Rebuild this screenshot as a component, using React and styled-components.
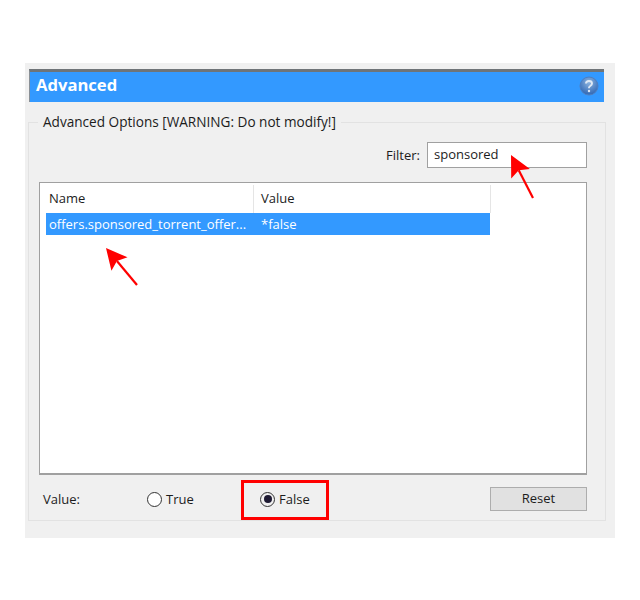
import React from "react";
import styled, { createGlobalStyle } from "styled-components";

const Global = createGlobalStyle`
  html, body { margin: 0; padding: 0; background: #fff; }
  body { font-family: "Open Sans", "Noto Sans", "Liberation Sans", sans-serif; font-size: 13px; color: #1c1c1c; }
`;

const Page = styled.div`
  width: 640px;
  height: 600px;
  padding: 63px 0 0 25px;
  box-sizing: border-box;
  overflow: hidden;
`;

const Window = styled.div`
  position: relative;
  width: 590px;
  height: 475px;
  box-sizing: border-box;
  padding: 6px 0 0 4px;
  background: #f0f0f0;
`;

const TitleBar = styled.div`
  width: 575px;
  height: 33px;
  box-sizing: border-box;
  border-top: 3px solid #6f7478;
  border-left: 1px solid #8a9096;
  background: #3399ff;
  display: flex;
  align-items: center;
  justify-content: space-between;
  padding: 0 5px 2px 6px;
`;

const Title = styled.h1`
  margin: 0 0 3px;
  font-size: 16.6px;
  font-weight: 700;
  color: #fff;
`;

const Group = styled.div`
  position: relative;
  width: 578px;
  height: 399px;
  margin: 20px 0 0 -1px;
  box-sizing: border-box;
  border: 1px solid #e2e2e2;
  padding: 19px 18px 0 10px;
  display: flex;
  flex-direction: column;
`;

const Legend = styled.div`
  position: absolute;
  top: -10px;
  left: 9px;
  padding: 0 5px;
  background: #f0f0f0;
  font-size: 13.6px;
  line-height: 18px;
  white-space: nowrap;
`;

const FilterRow = styled.div`
  display: flex;
  justify-content: flex-end;
  align-items: center;
  gap: 7px;
  height: 26px;
`;

const FilterInput = styled.div`
  width: 160px;
  height: 26px;
  box-sizing: border-box;
  border: 1px solid #a0a0a0;
  background: #fff;
  padding: 0 6px;
  line-height: 23px;
`;

const List = styled.div`
  margin-top: 14px;
  height: 293px;
  box-sizing: border-box;
  border: 1px solid #a0a0a0;
  border-bottom-width: 2px;
  background: #fff;
  padding: 2px 96px 0 6px;
`;

const Columns = styled.div`
  display: grid;
  grid-template-columns: 208px 237px;
  height: ${(p) => p.$h}px;
  align-items: center;
  background: ${(p) => (p.$selected ? "#3399ff" : "transparent")};
  color: ${(p) => (p.$selected ? "#fff" : "inherit")};
`;

const HeadCell = styled.div`
  height: 100%;
  padding-left: ${(p) => p.$pad}px;
  line-height: 26px;
  border-right: 1px solid #e5e5e5;
`;

const Cell = styled.div`
  padding-left: ${(p) => p.$pad}px;
  white-space: nowrap;
  overflow: hidden;
`;

const Bottom = styled.div`
  display: flex;
  align-items: center;
  height: 24px;
  margin-top: 12px;
`;

const ValueLabel = styled.div`
  width: 108px;
  padding-left: 4px;
  box-sizing: border-box;
`;

const RadioOption = styled.div`
  display: flex;
  align-items: center;
  gap: 4px;
  width: ${(p) => p.$w}px;
`;

const RadioDot = styled.span`
  width: 15px;
  height: 15px;
  box-sizing: border-box;
  border: 1px solid #333;
  border-radius: 50%;
  background: ${(p) => (p.$checked ? "#f0f0f0" : "#fff")};
  display: flex;
  align-items: center;
  justify-content: center;
  &::after {
    content: "";
    display: ${(p) => (p.$checked ? "block" : "none")};
    width: 8px;
    height: 8px;
    border-radius: 50%;
    background: #1e1a33;
  }
`;

const ResetButton = styled.div`
  margin-left: auto;
  width: 97px;
  height: 24px;
  box-sizing: border-box;
  border: 1px solid #adadad;
  background: #e1e1e1;
  text-align: center;
  line-height: 21px;
`;

const Highlight = styled.div`
  position: absolute;
  left: 216px;
  top: 417px;
  width: 88px;
  height: 40px;
  box-sizing: border-box;
  border: 3px solid #ff0000;
`;

const ArrowSvg = styled.svg`
  position: absolute;
  left: 0;
  top: 0;
  pointer-events: none;
`;

function Arrow({ x1, y1, x2, y2 }) {
  const a = Math.atan2(y2 - y1, x2 - x1);
  const L = 21, W = 10.5;
  const bx = x2 - Math.cos(a) * L, by = y2 - Math.sin(a) * L;
  const nx = -Math.sin(a) * W, ny = Math.cos(a) * W;
  const ix = x2 - Math.cos(a) * (L - 4), iy = y2 - Math.sin(a) * (L - 4);
  return (
    <g fill="#ff0000" stroke="none">
      <line x1={x1} y1={y1} x2={ix} y2={iy} stroke="#ff0000" strokeWidth="2.2" />
      <polygon points={`${x2},${y2} ${bx + nx},${by + ny} ${ix},${iy} ${bx - nx},${by - ny}`} />
    </g>
  );
}

function HelpIcon() {
  return (
    <svg width="20" height="20" viewBox="0 0 20 20" aria-hidden="true">
      <defs>
        <radialGradient id="hg" cx="50%" cy="30%" r="70%">
          <stop offset="0%" stopColor="#8cb4e0" />
          <stop offset="100%" stopColor="#2f66b4" />
        </radialGradient>
      </defs>
      <circle cx="10" cy="10" r="9" fill="url(#hg)" stroke="#4f7fc0" strokeWidth="1" />
      <path d="M7 7.6C7 5.8 8.4 5 10 5s3 .9 3 2.5c0 1.4-1 2-1.8 2.5-.7.4-1.2.9-1.2 1.8v.4" fill="none" stroke="#dfe9f5" strokeWidth="1.9" />
      <circle cx="10" cy="15" r="1.2" fill="#dfe9f5" />
    </svg>
  );
}

export default function App() {
  return (
    <Page>
      <Global />
      <Window>
        <TitleBar>
          <Title>Advanced</Title>
          <HelpIcon />
        </TitleBar>
        <Group>
          <Legend>Advanced Options [WARNING: Do not modify!]</Legend>
          <FilterRow>
            <span>Filter:</span>
            <FilterInput>sponsored</FilterInput>
          </FilterRow>
          <List>
            <Columns $h={28}>
              <HeadCell $pad={3}>Name</HeadCell>
              <HeadCell $pad={7}>Value</HeadCell>
            </Columns>
            <Columns $h={22} $selected>
              <Cell $pad={3}>offers.sponsored_torrent_offer...</Cell>
              <Cell $pad={7}>*false</Cell>
            </Columns>
          </List>
          <Bottom>
            <ValueLabel>Value:</ValueLabel>
            <RadioOption $w={113}>
              <RadioDot />
              True
            </RadioOption>
            <RadioOption $w={80}>
              <RadioDot $checked />
              False
            </RadioOption>
            <ResetButton>Reset</ResetButton>
          </Bottom>
        </Group>
        <Highlight />
        <ArrowSvg width="590" height="475" viewBox="0 0 590 475">
          <Arrow x1={508} y1={135} x2={486} y2={92} />
          <Arrow x1={112} y1={222} x2={81} y2={185} />
        </ArrowSvg>
      </Window>
    </Page>
  );
}
